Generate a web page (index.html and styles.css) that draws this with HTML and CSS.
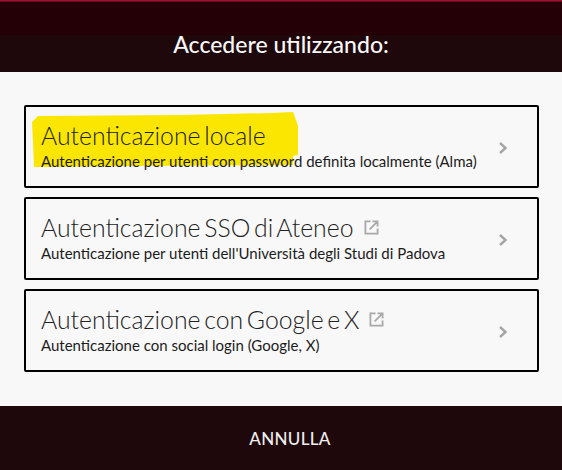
FILE: index.html
```html
<!DOCTYPE html>
<html lang="it">
<head>
<meta charset="utf-8">
<title>Accedere utilizzando</title>
<link rel="stylesheet" href="styles.css">
</head>
<body>
<div class="dialog">
  <div class="topline"></div>
  <div class="topband"></div>
  <h1 class="heading">Accedere utilizzando:</h1>
  <main class="panel">
    <a class="card">
      <svg class="highlight" viewBox="0 0 270 58" width="270" height="58"><path d="M1 10 L7 4 L150 3 L240 1 L262 0 L265 8 L267 14 L267 43 L262 44 L262 53 L100 54 L3 55 L2 30 Z"/></svg>
      <span class="text">
        <span class="title">Autenticazione locale</span>
        <span class="sub">Autenticazione per utenti con password definita localmente (Alma)</span>
      </span>
      <svg class="chev" viewBox="0 0 10 14" width="10" height="14"><path d="M2 2 L7.5 7 L2 12"/></svg>
    </a>
    <a class="card">
      <span class="text">
        <span class="title">Autenticazione SSO di Ateneo<svg class="ext" viewBox="0 0 16 16" width="16" height="16"><path d="M7 1.5 H1.5 V14.5 H14.5 V9 M6 10 L14.5 1.5 M9 1.5 H14.5 V7"/></svg></span>
        <span class="sub">Autenticazione per utenti dell'Università degli Studi di Padova</span>
      </span>
      <svg class="chev" viewBox="0 0 10 14" width="10" height="14"><path d="M2 2 L7.5 7 L2 12"/></svg>
    </a>
    <a class="card">
      <span class="text">
        <span class="title">Autenticazione con Google e X<svg class="ext" viewBox="0 0 16 16" width="16" height="16"><path d="M7 1.5 H1.5 V14.5 H14.5 V9 M6 10 L14.5 1.5 M9 1.5 H14.5 V7"/></svg></span>
        <span class="sub">Autenticazione con social login (Google, X)</span>
      </span>
      <svg class="chev" viewBox="0 0 10 14" width="10" height="14"><path d="M2 2 L7.5 7 L2 12"/></svg>
    </a>
  </main>
  <footer class="footer">ANNULLA</footer>
</div>
</body>
</html>
```
FILE: styles.css
```css
* { box-sizing: border-box; }
html, body { margin: 0; padding: 0; }
body { width: 562px; height: 470px; overflow: hidden; background: #1f080b; font-family: "Lato", "Noto Sans", sans-serif; }
.dialog { display: flex; flex-direction: column; height: 470px; }
.topline { height: 2px; background: linear-gradient(#a01030 50%, #6a0a20 50%); }
.topband { height: 33px; background: #240006; }
.heading { height: 37px; margin: 0; background: #1f080b; color: #f8f8f8; font-size: 23px; font-weight: 500; line-height: 18px; text-align: center; }
.panel { flex: 1; background: #f8f8f8; padding: 33px 23px 34px 24px; display: flex; flex-direction: column; gap: 9px; }
.card { position: relative; height: 83px; border: 2px solid #000; border-radius: 2px; display: flex; align-items: center; padding: 0 29px 0 15px; }
.highlight { position: absolute; left: 5px; top: 5px; fill: #fae600; }
.text { position: relative; flex: 1; display: flex; flex-direction: column; padding-bottom: 2px; }
.title { font-size: 24.8px; font-weight: 300; word-spacing: -3px; line-height: 29px; margin-bottom: 1px; color: #222; display: flex; align-items: center; }
.sub { font-size: 15px; line-height: 20px; color: #1c1c1c; }
.ext { margin: 0 0 0 10px; width: 15px; height: 15px; fill: none; stroke: #a8a8a8; stroke-width: 1.9; }
.chev { position: relative; margin-top: 2px; fill: none; stroke: #a5a5a5; stroke-width: 2.4; }
.footer { height: 64px; padding-left: 18px; background: #1f080b; color: #eee; font-size: 17px; font-weight: 500; display: flex; align-items: center; justify-content: center; letter-spacing: 0.3px; }
```
